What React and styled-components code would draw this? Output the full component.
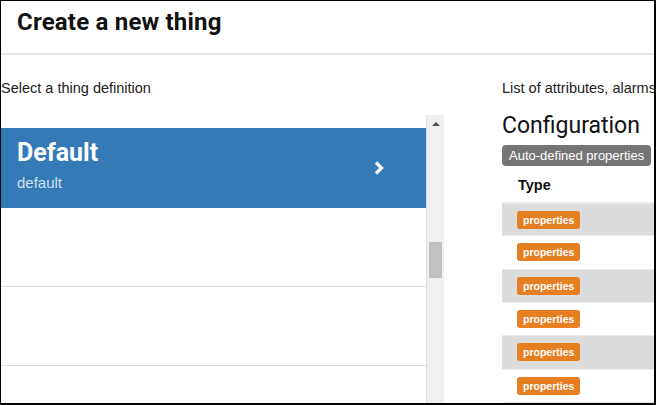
import React from "react";
import styled, { createGlobalStyle } from "styled-components";

const Global = createGlobalStyle`
  html, body { margin: 0; padding: 0; background: #fff; }
  body { font-family: "Liberation Sans", Arial, sans-serif; color: #222; }
`;

const Frame = styled.div`
  box-sizing: border-box;
  width: 656px;
  height: 405px;
  border-top: 1px solid #000;
  border-left: 1px solid #000;
  border-right: 2px solid #000;
  border-bottom: 2px solid #000;
  overflow: hidden;
  background: #fff;
`;

const Header = styled.header`
  box-sizing: border-box;
  height: 54px;
  padding: 9px 0 0 16px;
  border-bottom: 2px solid #e3e7ea;
`;

const Title = styled.h1`
  margin: 0;
  font-family: Roboto, "Liberation Sans", sans-serif;
  font-weight: 700;
  font-size: 24px;
  line-height: 24px;
  letter-spacing: 0.2px;
  color: #111;
`;

const Body = styled.div`
  display: grid;
  grid-template-columns: 443px 1fr;
  column-gap: 58px;
  padding-top: 23px;
`;

const Column = styled.section`
  display: flex;
  flex-direction: column;
  min-width: 0;
`;

const Label = styled.div`
  font-size: 14.5px;
  line-height: 20px;
  color: #222;
  white-space: nowrap;
`;

const ListWrap = styled.div`
  margin-top: 17px;
  height: 288px;
  display: flex;
`;

const Items = styled.div`
  flex: 1;
  display: flex;
  flex-direction: column;
  overflow: hidden;
  padding-top: 13px;
`;

const Item = styled.div`
  box-sizing: border-box;
  flex: none;
  height: ${(p) => (p.$active ? 80 : 79)}px;
  display: flex;
  align-items: center;
  justify-content: space-between;
  padding: 0 41px 0 16px;
  background: ${(p) => (p.$active ? "#337ab7" : "#fff")};
  border-bottom: 1px solid ${(p) => (p.$active ? "#337ab7" : "#dddddd")};
`;

const ItemText = styled.div`
  display: flex;
  flex-direction: column;
  align-self: flex-start;
  padding-top: 12px;
`;

const ItemName = styled.div`
  font-family: Roboto, "Liberation Sans", sans-serif;
  font-weight: 700;
  font-size: 25px;
  line-height: 25px;
  color: #fff;
`;

const ItemSub = styled.div`
  margin-top: 8px;
  font-size: 15px;
  line-height: 20px;
  color: #cfe0f0;
`;

const Scrollbar = styled.div`
  box-sizing: border-box;
  width: 18px;
  flex: none;
  background: #f0f0f0;
  border-left: 1px solid #dedede;
  display: flex;
  flex-direction: column;
  align-items: center;
`;

const ArrowBox = styled.div`
  height: 17px;
  width: 100%;
  display: flex;
  justify-content: center;
  padding-top: 7px;
  box-sizing: border-box;
`;

const ArrowUp = styled.div`
  width: 0;
  height: 0;
  border-left: 4px solid transparent;
  border-right: 4px solid transparent;
  border-bottom: 4px solid #505050;
`;

const Thumb = styled.div`
  margin-top: 110px;
  width: 13px;
  height: 36px;
  background: #c1c1c1;
`;

const Heading = styled.h2`
  margin: 14px 0 0;
  font-family: Roboto, "Liberation Sans", sans-serif;
  font-weight: 400;
  font-size: 23px;
  line-height: 28px;
  letter-spacing: 0;
  color: #111;
`;

const GrayBadge = styled.span`
  align-self: flex-start;
  margin-top: 5px;
  height: 21px;
  line-height: 21px;
  padding: 0 7px;
  border-radius: 4px;
  background: #757575;
  color: #fff;
  font-size: 13px;
  white-space: nowrap;
`;

const Table = styled.div`
  display: flex;
  flex-direction: column;
  width: 200px;
`;

const HeadRow = styled.div`
  box-sizing: border-box;
  height: 36px;
  display: flex;
  align-items: center;
  padding: 2px 0 0 16px;
  font-weight: 700;
  font-size: 14.5px;
  color: #111;
`;

const Row = styled.div`
  box-sizing: border-box;
  height: 33.33px;
  display: flex;
  align-items: center;
  padding-left: 15px;
  border-top: ${(p) => (p.$first ? 2 : 1)}px solid #ebebeb;
  background: ${(p) => (p.$striped ? "#dcdcdc" : "#fff")};
`;

const OrangeBadge = styled.span`
  height: 18px;
  line-height: 18px;
  padding: 0 6px;
  border-radius: 3px;
  background: #e67e22;
  color: #fff;
  font-weight: 700;
  font-size: 10.5px;
`;

const Chevron = () => (
  <svg width="12" height="16" viewBox="0 0 12 16">
    <polyline points="3,2.5 8.5,8 3,13.5" fill="none" stroke="#fff" strokeWidth="3.2" />
  </svg>
);

export default function App() {
  const rows = [0, 1, 2, 3, 4, 5, 6];
  return (
    <>
      <Global />
      <Frame>
        <Header>
          <Title>Create a new thing</Title>
        </Header>
        <Body>
          <Column>
            <Label>Select a thing definition</Label>
            <ListWrap>
              <Items>
                <Item $active>
                  <ItemText>
                    <ItemName>Default</ItemName>
                    <ItemSub>default</ItemSub>
                  </ItemText>
                  <Chevron />
                </Item>
                <Item />
                <Item />
                <Item />
              </Items>
              <Scrollbar>
                <ArrowBox>
                  <ArrowUp />
                </ArrowBox>
                <Thumb />
              </Scrollbar>
            </ListWrap>
          </Column>
          <Column>
            <Label>List of attributes, alarms and commands</Label>
            <Heading>Configuration</Heading>
            <GrayBadge>Auto-defined properties</GrayBadge>
            <Table>
              <HeadRow>Type</HeadRow>
              {rows.map((i) => (
                <Row key={i} $first={i === 0} $striped={i % 2 === 0}>
                  {i < 6 && <OrangeBadge>properties</OrangeBadge>}
                </Row>
              ))}
            </Table>
          </Column>
        </Body>
      </Frame>
    </>
  );
}
